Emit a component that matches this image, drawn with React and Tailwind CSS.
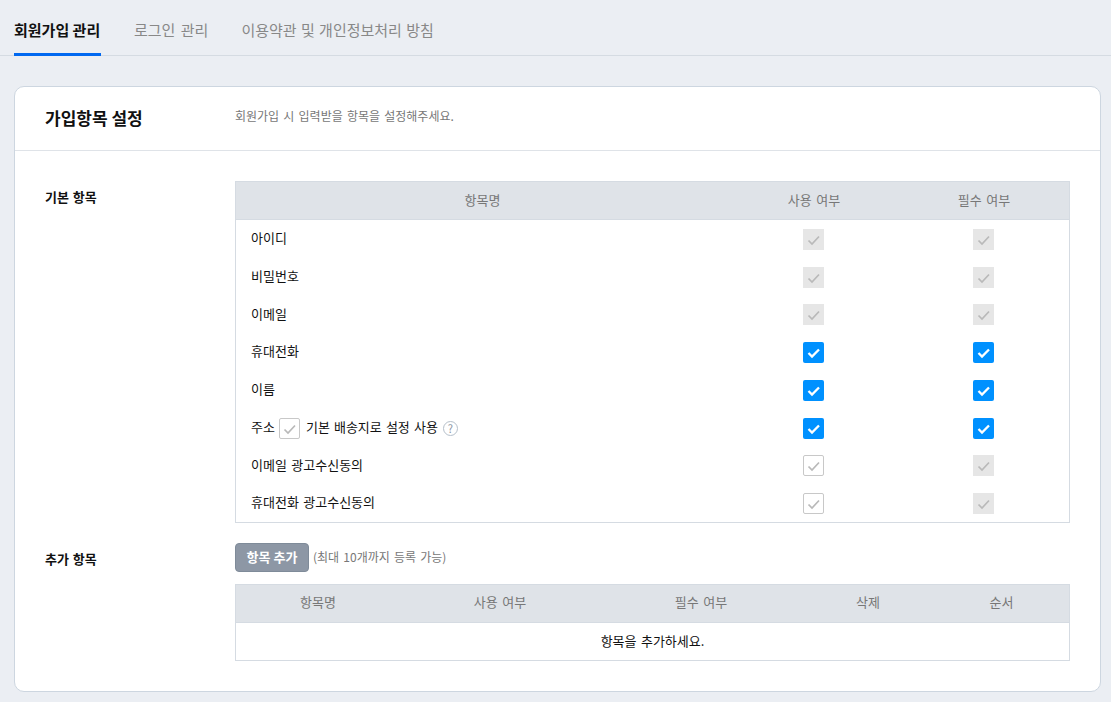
const font = { fontFamily: '"Noto Sans CJK KR", "Noto Sans", sans-serif' };

function CheckIcon({ className }) {
  return (
    <svg viewBox="0 0 21 21" className={className} fill="none">
      <path d="M5.5 11.5L9 15L16 7.5" stroke="currentColor" strokeWidth="1.7" />
    </svg>
  );
}

// type: on = blue, locked = gray filled, off = white with border
function Check({ type }) {
  if (type === "on") {
    return (
      <span className="block w-[21px] h-[21px] rounded-[2px] bg-[#0091ff] text-white">
        <svg viewBox="0 0 21 21" className="w-[21px] h-[21px]" fill="none">
          <path d="M5.5 11L9 14.5L16 7.5" stroke="currentColor" strokeWidth="2.3" />
        </svg>
      </span>
    );
  }
  if (type === "locked") {
    return (
      <span className="block w-[21px] h-[21px] bg-[#e6e6e6] text-[#b9b9b9]">
        <CheckIcon className="w-[21px] h-[21px]" />
      </span>
    );
  }
  return (
    <span className="block w-[21px] h-[21px] rounded-[2px] border border-[#c8c8c8] bg-white text-[#b9b9b9]">
      <CheckIcon className="w-[21px] h-[21px] -m-[1px] max-w-none" />
    </span>
  );
}

const rows = [
  { name: "아이디", use: "locked", req: "locked" },
  { name: "비밀번호", use: "locked", req: "locked" },
  { name: "이메일", use: "locked", req: "locked" },
  { name: "휴대전화", use: "on", req: "on" },
  { name: "이름", use: "on", req: "on" },
  { name: "주소", use: "on", req: "on", address: true },
  { name: "이메일 광고수신동의", use: "off", req: "locked" },
  { name: "휴대전화 광고수신동의", use: "off", req: "locked" },
];

function App() {
  return (
    <div style={font} className="w-[1111px] h-[702px] overflow-hidden bg-[#ebeef3] text-[13px] text-[#111] [word-spacing:1.5px]">
      <div className="h-[56px] border-b border-[#d5dbe2] pl-[14px] flex gap-[33px] [word-spacing:1px]">
        <div className="h-[56px] w-[87px] border-b-[3px] border-[#0068f0] text-[15px] font-bold leading-[60px] whitespace-nowrap [word-spacing:0]">
          회원가입 관리
        </div>
        <div className="text-[15px] leading-[60px] text-[#888] whitespace-nowrap [word-spacing:2px]">로그인 관리</div>
        <div className="text-[15px] leading-[60px] text-[#888] whitespace-nowrap">이용약관 및 개인정보처리 방침</div>
      </div>

      <div className="mt-[30px] mx-[14px] h-[606px] w-[1087px] rounded-[10px] border border-[#cdd6e0] bg-white">
        <div className="h-[64px] border-b border-[#dfe3e8] flex">
          <div className="w-[220px] pl-[30px] text-[17px] font-bold leading-[62px] [word-spacing:0]">가입항목 설정</div>
          <div className="text-[12px] text-[#777] leading-[58px]">회원가입 시 입력받을 항목을 설정해주세요.</div>
        </div>

        <div className="pt-[30px] pl-[30px]">
          <div className="flex">
            <div className="w-[190px] font-bold leading-[32px] [word-spacing:1px]">기본 항목</div>
            <div className="w-[835px] border border-[#d5dbe2] border-t-0">
              <div className="h-[39px] flex items-center bg-[#dfe3e8] border-y border-[#d5dbe2] text-[#777] text-center pb-[2px]">
                <div className="w-[493px]">항목명</div>
                <div className="w-[170px]">사용 여부</div>
                <div className="w-[170px]">필수 여부</div>
              </div>
              {rows.map((r) => (
                <div key={r.name} className="h-[37.75px] flex items-center">
                  <div className="w-[493px] pl-[15px] flex items-center">
                    <span className="mb-[2px]">{r.name}</span>
                    {r.address && (
                      <>
                        <span className="ml-[4px] mt-[1.1px]"><Check type="off" /></span>
                        <span className="ml-[6px] mb-[2px] [word-spacing:1.2px]">기본 배송지로 설정 사용</span>
                        <span className="ml-[5px] mt-[1px] w-[15px] h-[15px] rounded-full border border-[#b5bfca] text-[11px] leading-[13px] text-center text-[#8b96a3]">?</span>
                      </>
                    )}
                  </div>
                  <div className="w-[170px] flex justify-center pr-[2px] mt-[1.1px]"><Check type={r.use} /></div>
                  <div className="w-[170px] flex justify-center pr-[2px] mt-[1.1px]"><Check type={r.req} /></div>
                </div>
              ))}
            </div>
          </div>

          <div className="flex mt-[20px]">
            <div className="w-[190px] font-bold leading-[32px] [word-spacing:1px]">추가 항목</div>
            <div className="w-[835px]">
              <div className="flex items-center h-[29px]">
                <div className="w-[74px] h-[29px] rounded-[4px] border border-[#7f8b99] bg-[#8d97a5] text-white font-bold text-center leading-[26px] [word-spacing:0]">항목 추가</div>
                <span className="ml-[4px] text-[12px] text-[#777] mb-[2px]">(최대 10개까지 등록 가능)</span>
              </div>
              <div className="mt-[12px] border border-[#d5dbe2] border-t-0">
                <div className="h-[39px] flex items-center bg-[#dfe3e8] border-y border-[#d5dbe2] text-[#777] text-center pb-[3px]">
                  <div className="w-[164px]">항목명</div>
                  <div className="w-[200px]">사용 여부</div>
                  <div className="w-[202px]">필수 여부</div>
                  <div className="w-[132px]">삭제</div>
                  <div className="w-[135px]">순서</div>
                </div>
                <div className="h-[37px] flex items-center justify-center pb-[2px]">항목을 추가하세요.</div>
              </div>
            </div>
          </div>
        </div>
      </div>
    </div>
  );
}

export default App;
